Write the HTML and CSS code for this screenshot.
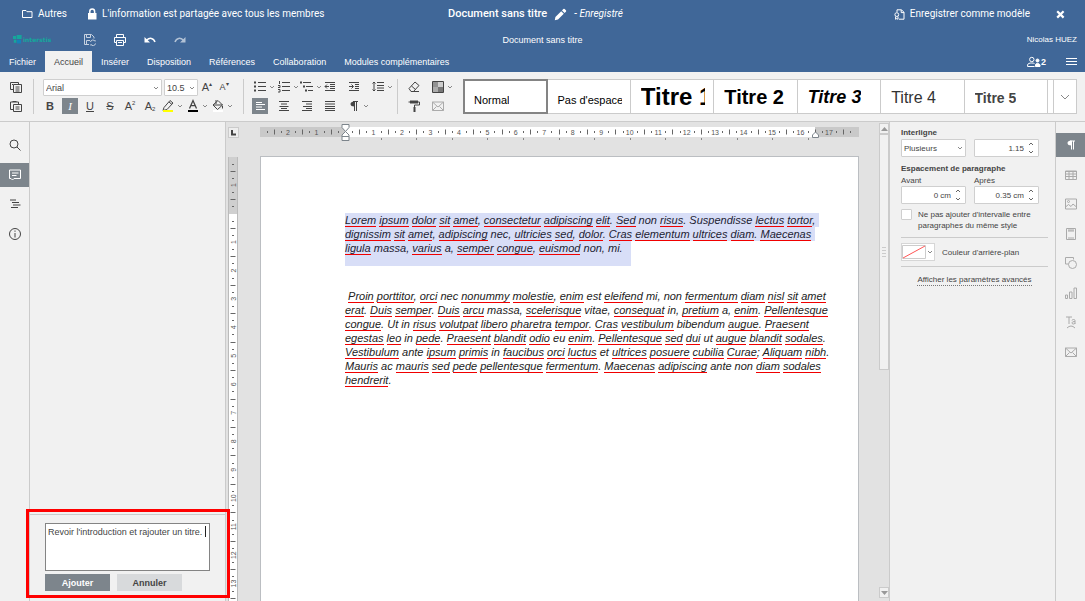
FILE: index.html
```html
<!DOCTYPE html>
<html lang="fr">
<head>
<meta charset="utf-8">
<title>Document sans titre</title>
<link rel="stylesheet" href="styles.css">
</head>
<body>
<svg class="defs" width="0" height="0">
  <symbol id="chev" viewBox="0 0 8 16"><path d="M2 7l2 2 2-2" /></symbol>
  <symbol id="mail" viewBox="0 0 16 16"><path d="M2.500 4h11v8.500h-11zM2.500 4l5.500 5 5.500-5M2.500 12.500l4-4M13.500 12.500l-4-4"/></symbol>
</svg>
<header class="header">
  <div class="bar top">
    <div class="side">
      <a class="item folder" href="#"><svg width="11" height="10" viewBox="0 0 11 10" class="ln"><path d="M.5 8.500v-7h3.500l1 1.200h5v5.800z"/></svg>Autres</a>
      <span class="item"><svg width="10" height="12" viewBox="0 0 10 12"><path fill="#fff" d="M1 5h8.500v6.500H1z"/><path class="ln" stroke-width="1.500" d="M2.800 5.500V3.500a2.400 2.400 0 0 1 4.800 0v2"/></svg>L'information est partagée avec tous les membres</span>
    </div>
    <div class="doc"><h1>Document sans titre</h1><svg width="13" height="13" viewBox="0 0 13 13"><path fill="#fff" d="M.8 12.200l.6-3.200 5.800-5.800 2.600 2.600L4 11.600zM8 2.400l1.300-1.300a1 1 0 0 1 1.400 0l1.200 1.200a1 1 0 0 1 0 1.400L10.600 5z"/></svg><em>- Enregistré</em></div>
    <div class="side end">
      <button class="item"><svg width="11" height="11" viewBox="0 0 11 11" class="ln"><path d="M3 3V.8h4.500L10 3.300v6.900H5M7.200.8v2.800H10"/><circle cx="2.800" cy="5.600" r="1.900"/><path d="M1.600 7.500v2.800l1.200-.8 1.200.8V7.500"/></svg>Enregistrer comme modèle</button>
      <button class="close" aria-label="Fermer"><svg width="9" height="9" viewBox="0 0 9 9"><path stroke="#fff" stroke-width="2.200" d="M1.200 1.200l6.400 6.400M7.600 1.200L1.200 7.600"/></svg></button>
    </div>
  </div>
  <div class="bar mid">
    <div class="quick">
      <span class="logo"><svg width="9" height="9" viewBox="0 0 9 9"><path fill="#15a79c" d="M0 1h3v3H0zM3.600 0h5v4h-5zM.8 4.800h2.600v3H.8z"/><path fill="#1681b8" d="M4 4.800h4v3.700H4z"/></svg>interstis</span>
      <button aria-label="Enregistrer"><svg width="14" height="14" viewBox="0 0 14 14" class="ln dim"><path d="M6 11.500H1.500v-10h7l2.500 2.500v1.500M3.500 1.500v3h4v-3M3.500 11.500v-4H7M7.500 9a2.400 2.400 0 0 1 4.500-.7V7M12.500 10.500a2.400 2.400 0 0 1-4.500.8v1.400"/></svg></button>
      <button aria-label="Imprimer"><svg width="14" height="14" viewBox="0 0 14 14" class="ln"><path d="M3.500 4.500v-3h7v3M3.500 9.500h-2v-5h11v5h-2M3.500 7.500h7v5h-7zM5 9.500h4"/></svg></button>
      <button aria-label="Annuler l'action"><svg width="14" height="14" viewBox="0 0 14 14"><path fill="#fff" d="M1.500 4v5.500H7z"/><path stroke="#fff" stroke-width="1.500" fill="none" d="M3.500 7.300C6.500 4.500 10.500 4.500 12 9"/></svg></button>
      <button aria-label="Rétablir"><svg width="14" height="14" viewBox="0 0 14 14" opacity=".6"><path fill="#fff" d="M12.500 4v5.500H7z"/><path stroke="#fff" stroke-width="1.500" fill="none" d="M10.500 7.300C7.500 4.500 3.500 4.500 2 9"/></svg></button>
    </div>
    <span>Document sans titre</span>
    <span class="user">Nicolas HUEZ</span>
  </div>
  <nav class="tabs">
    <a href="#">Fichier</a><a href="#" class="on">Accueil</a><a href="#">Insérer</a><a href="#">Disposition</a><a href="#">Références</a><a href="#">Collaboration</a><a href="#">Modules complémentaires</a>
    <div class="tools">
      <button class="people"><svg width="14" height="12" viewBox="0 0 14 12" class="ln"><circle cx="4.800" cy="3.500" r="2.200"/><path d="M.6 10.500v-1.500c0-1.500 2-2 4.200-2 1.200 0 2 .2 2.700.6M.6 10.500h7"/><circle cx="10.500" cy="4.500" r="1.500" fill="#fff"/><path fill="#fff" d="M8.500 10.500V9q0-1.500 2-1.500T13 9v1.500z"/></svg>2</button>
      <button aria-label="Menu"><svg width="11" height="9" viewBox="0 0 11 9" class="ln"><path d="M0 1.500h11M0 4.500h11M0 7.500h11"/></svg></button>
    </div>
  </nav>
</header>

<div class="toolbar">
  <div class="group clip">
    <button aria-label="Copier"><svg viewBox="0 0 16 16"><path d="M5.500 10.500h-3v-7h8v2M5.500 5.500h8v8h-8zM7.500 8h4M7.500 10h4M7.500 12h4M4 5.500h1"/></svg></button>
    <button aria-label="Coller"><svg viewBox="0 0 16 16"><path d="M5.500 11.500h-3v-7.500h8v2M4.500 3.500h4M5.500 6.500h8v7h-8zM7.500 9h4M7.500 11h4"/></svg></button>
  </div>
  <div class="group font">
    <div class="row pick">
      <select class="family" aria-label="Police"><option>Arial</option></select>
      <select class="size" aria-label="Taille"><option>10.5</option></select>
      <button class="glyph" aria-label="Agrandir">A<sup>▴</sup></button><button class="glyph sm" aria-label="Réduire">A<sup>▾</sup></button>
    </div>
    <div class="row">
      <div class="row marks"><button class="glyph b">B</button><button class="glyph i on">I</button><button class="glyph u">U</button><button class="glyph s">S</button><button class="glyph">A<sup>2</sup></button><button class="glyph">A<sub>2</sub></button></div>
      <button class="combo" aria-label="Surlignage"><svg viewBox="0 0 16 16"><path d="M4 9.500l6-7 3 2.500-6 6.500-4 1z M9 4l3 2.500"/><path class="fill yellow" d="M3 12h10v2H3z"/></svg><svg class="chev"><use href="#chev"/></svg></button>
      <button class="combo" aria-label="Couleur de police"><svg viewBox="0 0 16 16"><path d="M4.500 10.500l3.500-8 3.500 8M5.700 7.700h4.600" stroke-width="1.300"/><path class="fill black" d="M3 12h10v2H3z"/></svg><svg class="chev"><use href="#chev"/></svg></button>
      <button class="combo" aria-label="Remplissage"><svg viewBox="0 0 16 16"><path class="fill white" d="M3 12h10v2H3z"/><path d="M3 7l5-4.500 4.500 4.500-5 4.500zM6 2v4M12.500 8v2.500M3.500 7h9"/></svg><svg class="chev"><use href="#chev"/></svg></button>
    </div>
  </div>
  <div class="group para">
    <button aria-label="Puces"><svg viewBox="0 0 16 16"><path d="M6 3.500h8M6 7.500h8M6 11.500h8"/><path class="fill" d="M2 2.500h2v2H2zM2 6.500h2v2H2zM2 10.500h2v2H2z"/></svg><svg class="chev"><use href="#chev"/></svg></button>
    <button aria-label="Numérotation"><svg viewBox="0 0 16 16"><path d="M6 3.500h8M6 7.500h8M6 11.500h8M3.500 2v3M2 6.500h2v2H2M2 10.500h2v2.500H2"/></svg><svg class="chev"><use href="#chev"/></svg></button>
    <button aria-label="Liste multiniveau"><svg viewBox="0 0 16 16"><path d="M4 3.500h8M7 7.500h7M9 11.500h5"/><path class="fill" d="M1 2.500h2v2H1zM4 6.500h2v2H4zM6 10.500h2v2H6z"/></svg><svg class="chev"><use href="#chev"/></svg></button>
    <button aria-label="Diminuer le retrait"><svg viewBox="0 0 16 16"><path d="M3 3.500h10M8 5.500h5M8 7.500h5M8 9.500h5M3 11.500h10M3 7.500h4M5 5.500l-2 2 2 2"/></svg></button>
    <button aria-label="Augmenter le retrait"><svg viewBox="0 0 16 16"><path d="M3 3.500h10M9 5.500h4M9 7.500h4M9 9.500h4M3 11.500h10M3 7.500h4M5.500 5.500l2 2-2 2"/></svg></button>
    <button aria-label="Interligne"><svg viewBox="0 0 16 16"><path d="M7 3.500h7M7 6.500h7M7 9h7M7 11.500h7M4 3v9M2.500 4.500L4 3l1.500 1.500M2.500 10.500L4 12l1.500-1.500"/></svg><svg class="chev"><use href="#chev"/></svg></button>
    <button class="on" aria-label="Gauche"><svg viewBox="0 0 16 16"><path d="M4 4.500h6M4 6.500h9M4 9h6M4 11.500h9"/></svg></button>
    <button aria-label="Centrer"><svg viewBox="0 0 16 16"><path d="M3 3.500h10M5 6h6M3.500 8.500h9M5 10.500h6M3 12.500h10"/></svg></button>
    <button aria-label="Droite"><svg viewBox="0 0 16 16"><path d="M3 3.500h10M7 6h6M4 8.500h9M7 10.500h6M3 12.500h10"/></svg></button>
    <button aria-label="Justifier"><svg viewBox="0 0 16 16"><path d="M3 3.500h10M3 6h10M3 8.500h10M3 10.500h10M3 12.500h10"/></svg></button>
    <button aria-label="Caractères non imprimables"><svg viewBox="0 0 16 16"><path d="M8.500 4v9M10.500 4v9M7 3.500h5"/><path class="fill" d="M8.500 3.500v5q-4 0-4-2.500t4-2.500z"/></svg><svg class="chev"><use href="#chev"/></svg></button>
  </div>
  <div class="group extra">
    <button aria-label="Effacer le style"><svg viewBox="0 0 16 16"><path d="M3 9.500l6-6.500 4 3.500-5.500 6H5zM5.500 7l4 3.500M7 12.500h6"/></svg></button>
    <button aria-label="Couleurs"><svg viewBox="0 0 16 16"><path class="fill" fill-opacity=".55" d="M3 3h5v5H3z"/><path class="fill" fill-opacity=".2" d="M8 3h5v5H8z"/><path class="fill" fill-opacity=".4" d="M3 8h5v5H3z"/><path class="fill" fill-opacity=".7" d="M8 8h5v5H8z"/><path d="M2.500 2.500h11v11h-11z"/></svg><svg class="chev"><use href="#chev"/></svg></button>
    <button aria-label="Copier le style"><svg viewBox="0 0 16 16"><path class="fill" d="M4 2.500h8v3H4z"/><path d="M12 4h1.500v3H8.500v2M4 4H2.500"/><path class="fill" d="M7.500 9h2v5h-2z"/></svg></button>
    <button class="off" aria-label="Publipostage"><svg viewBox="0 0 16 16"><use href="#mail"/></svg></button>
  </div>
  <div class="gallery">
    <button class="sel"><span class="n">Normal</span></button>
    <button><span class="n">Pas d'espacement</span></button>
    <button><span class="t1">Titre 1</span></button>
    <button><span class="t2">Titre 2</span></button>
    <button><span class="t3">Titre 3</span></button>
    <button><span class="t4">Titre 4</span></button>
    <button><span class="t5">Titre 5</span></button>
    <i></i>
    <button class="more" aria-label="Plus de styles"><svg width="10" height="8" viewBox="0 0 10 8"><path d="M1 2l4 4 4-4"/></svg></button>
  </div>
</div>

<main class="main">
  <nav class="rail left">
    <button aria-label="Recherche"><svg viewBox="0 0 16 16"><circle cx="7" cy="7" r="4"/><path d="M10 10l3.500 3.500"/></svg></button>
    <button class="on" aria-label="Commentaires"><svg viewBox="0 0 16 16"><path d="M2.500 3h11v8.500H7L5.500 13 4 11.500H2.500zM5 6h6.500M5 8.500h4.500"/></svg></button>
    <button aria-label="Navigation"><svg viewBox="0 0 16 16"><path d="M3 4h6M5 6.500h7M6 9h7.500M4 11.500h7"/></svg></button>
    <button aria-label="À propos"><svg viewBox="0 0 16 16"><circle cx="8" cy="8" r="5.500"/><path d="M8 7v4.500M8 4.500v1.300"/></svg></button>
  </nav>
  <aside class="comments">
    <form class="new">
      <textarea aria-label="Commentaire">Revoir l'introduction et rajouter un titre.</textarea>
      <span class="caret"></span>
      <div class="acts"><button type="button" class="ok">Ajouter</button><button type="button">Annuler</button></div>
      <div class="callout"></div>
    </form>
  </aside>
  <section class="editor">
    <div class="corner"><svg width="11" height="11" viewBox="0 0 11 11"><path d="M4 3v4.500h4" stroke="#444" stroke-width="2" fill="none"/></svg></div>
    <svg id="hruler" class="hruler"></svg>
    <svg id="vruler" class="vruler"></svg>
    <article class="page">
      <div class="selection">
        <p><u>Lorem</u> <u>ipsum</u> <u>dolor</u> <u>sit</u> <u>amet</u>, <u>consectetur</u> <u>adipiscing</u> <u>elit</u>. <u>Sed</u> non <u>risus</u>. Suspendisse <u>lectus</u> <u>tortor</u>,</p>
        <p><u>dignissim</u> <u>sit</u> <u>amet</u>, <u>adipiscing</u> nec, <u>ultricies</u> <u>sed</u>, <u>dolor</u>. <u>Cras</u> <u>elementum</u> <u>ultrices</u> <u>diam</u>. <u>Maecenas</u></p>
        <p class="last"><u>ligula</u> massa, <u>varius</u> a, <u>semper</u> <u>congue</u>, <u>euismod</u> non, mi.</p>
      </div>
      <div class="text">
        <p>&nbsp;<u>Proin</u> <u>porttitor</u>, <u>orci</u> nec <u>nonummy</u> <u>molestie</u>, <u>enim</u> est <u>eleifend</u> mi, non <u>fermentum</u> <u>diam</u> <u>nisl</u> <u>sit</u> <u>amet</u></p>
        <p><u>erat</u>. <u>Duis</u> <u>semper</u>. <u>Duis</u> <u>arcu</u> massa, <u>scelerisque</u> vitae, <u>consequat</u> in, <u>pretium</u> a, <u>enim</u>. <u>Pellentesque</u></p>
        <p><u>congue</u>. Ut in <u>risus</u> <u>volutpat</u> <u>libero</u> <u>pharetra</u> <u>tempor</u>. <u>Cras</u> <u>vestibulum</u> bibendum <u>augue</u>. <u>Praesent</u></p>
        <p><u>egestas</u> <u>leo</u> in <u>pede</u>. <u>Praesent</u> <u>blandit</u> <u>odio</u> eu <u>enim</u>. <u>Pellentesque</u> <u>sed</u> <u>dui</u> ut <u>augue</u> <u>blandit</u> <u>sodales</u>.</p>
        <p><u>Vestibulum</u> ante <u>ipsum</u> <u>primis</u> in <u>faucibus</u> <u>orci</u> <u>luctus</u> et <u>ultrices</u> <u>posuere</u> <u>cubilia</u> <u>Curae</u>; <u>Aliquam</u> <u>nibh</u>.</p>
        <p><u>Mauris</u> ac <u>mauris</u> <u>sed</u> <u>pede</u> <u>pellentesque</u> <u>fermentum</u>. <u>Maecenas</u> <u>adipiscing</u> ante non <u>diam</u> <u>sodales</u></p>
        <p><u>hendrerit</u>.</p>
      </div>
    </article>
  </section>
  <div class="scroll">
    <button aria-label="Haut"><svg width="7" height="4"><path fill="#999" d="M0 4l3.500-4L7 4z"/></svg></button>
    <div class="thumb"><i></i></div>
    <button class="down" aria-label="Bas"><svg width="7" height="4"><path fill="#999" d="M0 0l3.500 4L7 0z"/></svg></button>
  </div>
  <aside class="props">
    <div class="fields">
      <label class="strong" for="ls">Interligne</label>
      <select id="ls"><option>Plusieurs</option></select>
      <input class="spin" value="1.15" aria-label="Valeur d'interligne">
      <span class="strong para-title">Espacement de paragraphe</span>
      <label for="bf">Avant</label><label for="af">Après</label>
      <input class="spin" id="bf" value="0 cm"><input class="spin" id="af" value="0.35 cm">
    </div>
    <label class="check"><input type="checkbox"><span>Ne pas ajouter d'intervalle entre paragraphes du même style</span></label>
    <div class="bg"><button id="bgc" aria-label="Couleur d'arrière-plan"><svg width="24" height="14" viewBox="0 0 24 14"><path fill="#fff" stroke="#ccc" d="M.5.5h23v13H.5z"/><path stroke="#f55" d="M1 13L23 1"/></svg><svg class="chev"><use href="#chev"/></svg></button><label for="bgc">Couleur d'arrière-plan</label></div>
    <a class="adv" href="#">Afficher les paramètres avancés</a>
  </aside>
  <nav class="rail objects">
    <button class="on" aria-label="Paragraphe"><svg viewBox="0 0 16 16"><path d="M8.500 4v8.500M10.500 4v8.500M7 4h5"/><path class="fill" d="M8.500 3.500v5q-4 0-4-2.500t4-2.500z"/></svg></button>
    <button aria-label="Tableau"><svg viewBox="0 0 16 16"><path d="M2.500 4h11v8.500h-11zM2.500 7h11M2.500 9.500h11M6 4v8.500M10 4v8.500M2.500 4.500h11"/></svg></button>
    <button aria-label="Image"><svg viewBox="0 0 16 16"><path d="M2.500 3h11v10h-11zM2.500 11l3-2.500 2.500 2 2-2.500 3.500 3"/><circle cx="5.500" cy="5.500" r="1"/></svg></button>
    <button aria-label="En-tête"><svg viewBox="0 0 16 16"><path d="M3.500 2.500h9v11h-9zM5 4h6M5 12h6M5 5h6"/></svg></button>
    <button aria-label="Forme"><svg viewBox="0 0 16 16"><path d="M5.500 9h-3V2.500h8v2"/><circle cx="9.500" cy="9.500" r="4"/></svg></button>
    <button aria-label="Graphique"><svg viewBox="0 0 16 16"><path d="M2.500 10h2v3.500h-2zM6.500 7h2.500v6.500H6.500zM11 3h2.500v10.500H11z"/></svg></button>
    <button aria-label="Text Art"><svg viewBox="0 0 16 16"><path d="M3 3h6M6 3v7M12 10V6.500q0-1-1.500-1T9 6.500M12 7.500q-3 0-3 1.300T10.500 10 12 9M4 14q4-4 8 0"/></svg></button>
    <button aria-label="Publipostage"><svg viewBox="0 0 16 16"><use href="#mail"/></svg></button>
  </nav>
</main>
<script src="rulers.js"></script>
</body>
</html>
```
FILE: styles.css
```css
* { box-sizing: border-box; }
html, body { height: 100%; }
body {
  margin: 0; display: flex; flex-direction: column; overflow: hidden;
  background: #f1f1f1; color: #444;
  font: 9px/12px "Liberation Sans", Arial, sans-serif;
}
button { padding: 0; border: 0; background: none; color: inherit; font: inherit; display: flex; align-items: center; justify-content: center; }
a { color: inherit; text-decoration: none; }
svg { flex: none; fill: none; stroke: none; }
p, h1 { margin: 0; }
.defs { position: absolute; }
.ln { stroke: #fff; fill: none; }
.dim { opacity: .7; }

.header { background: #406798; color: #fff; }
.bar { display: grid; grid-template-columns: 1fr auto 1fr; align-items: center; }
.top { height: 28px; padding: 0 20px 0 22px; font: 400 10px/14px Roboto, sans-serif; }
.side { display: flex; gap: 20px; }
.end { justify-content: flex-end; gap: 26px; }
.item { display: flex; align-items: center; gap: 5px; }
.doc { display: flex; align-items: center; gap: 7px; margin-right: 16px; }
.doc h1 { font-size: 11px; font-weight: 500; }
.mid { height: 23px; padding: 0 8px 0 13px; }
.quick { display: flex; align-items: center; gap: 16px; }
.logo { display: flex; align-items: center; gap: 1px; width: 54px; color: #15a79c; font: bold 6px/9px "DejaVu Sans", sans-serif; }
.bar > span:not(.user) { margin-right: 5px; }
.user { text-align: right; font-size: 8px; }
.tabs { display: flex; height: 21px; }
.tabs > a { display: flex; align-items: center; padding: 0 9px; }
.tabs .on { background: #f1f1f1; color: #444; }
.tools { display: flex; gap: 20px; margin-left: auto; padding-right: 8px; }
.people { font-weight: bold; }

.toolbar { display: flex; height: 50px; padding: 7px 8px 7px 8px; border-bottom: 1px solid #cbcbcb; }
.toolbar svg, .rail svg { width: 16px; height: 16px; stroke: currentColor; }
svg .fill { fill: currentColor; stroke: none; }
svg .yellow { fill: #ff0; }
svg .black { fill: #000; }
svg .white { fill: #fff; }
svg.chev, .toolbar svg.chev { width: 8px; height: 16px; stroke: #888; }
.group { border-right: 1px solid #cbcbcb; display: grid; grid-template-rows: 16px 16px; gap: 3px 0; height: 35px; }
.group button { height: 16px; justify-content: flex-start; }
.clip { width: 26px; }
.font { width: 210px; padding-left: 8px; }
.row { display: flex; }
.pick { gap: 1px; padding-left: 1px; }
.marks { gap: 4px; padding-right: 2px; }
.group .glyph { width: 16px; justify-content: center; font-size: 11px; line-height: 14px; }
.glyph sup, .glyph sub { font-size: 6px; line-height: 6px; }
.glyph sup { align-self: flex-start; padding-top: 2px; }
.glyph sub { align-self: flex-end; padding-bottom: 2px; }
.group .sm { font-size: 9px; }
.b { font-weight: bold; }
.i { font-family: "Liberation Serif", serif; font-style: italic; }
.u { text-decoration: underline; }
.s { text-decoration: line-through; }
.group .on { background: #7d858c; color: #fff; width: 16px; }
.combo { width: 25px; }
.para { width: 154px; padding-left: 8px; grid-template-columns: 24px 23px 23px 24px 24px 24px; }
.extra { padding-left: 8px; grid-template-columns: 24px 24px; border: 0; width: 65px; }
.off { opacity: .4; }

select, input, textarea { margin: 0; border: 1px solid #cfcfcf; border-radius: 1px; background: #fff; color: #444; font: inherit; outline: 0; }
select {
  appearance: none; height: 17px; padding: 0 2px;
  background: #fff url("data:image/svg+xml,%3Csvg xmlns='http://www.w3.org/2000/svg' width='6' height='4'%3E%3Cpath d='M1 1l2 2 2-2' fill='none' stroke='%23888'/%3E%3C/svg%3E") no-repeat right 2px center;
}
.family { width: 119px; margin-right: 1px; }
.size { width: 34px; }

.gallery { flex: 1; display: grid; grid-template-columns: repeat(7, 1fr) 6px 22px; height: 35px; border: 1px solid #cbcbcb; background: #fff; }
.gallery button { border-right: 1px solid #cbcbcb; padding: 0 8px 0 10px; justify-content: flex-start; overflow: hidden; min-width: 0; color: #000; }
.gallery i { border-right: 1px solid #cbcbcb; }
.gallery .sel { outline: 2px solid #848484; outline-offset: -1px; border: 0; }
.gallery span { overflow: hidden; white-space: nowrap; text-align: left; }
.gallery .n { font-size: 11px; line-height: 14px; padding-top: 6px; }
.gallery .t1 { font-size: 24px; line-height: 30px; font-weight: bold; }
.gallery .t2 { font-size: 20px; line-height: 24px; font-weight: bold; }
.gallery .t3 { font-size: 18px; line-height: 22px; font-weight: bold; font-style: italic; }
.gallery .t4 { font-size: 16px; line-height: 20px; padding-top: 3px; color: #333; }
.gallery .t5 { font-size: 14px; line-height: 20px; padding-top: 3px; color: #444; font-weight: bold; }
.gallery .more { border: 0; padding: 0; justify-content: center; }
.gallery .more svg { width: 10px; height: 8px; stroke: #888; }

.main { flex: 1; display: flex; min-height: 0; }
.rail { display: grid; grid-auto-rows: 24px; align-content: space-between; margin-top: 11px; width: 29px; }
.rail .on { background: #7d858c; color: #fff; }
.left { height: 113px; }
.objects { height: 231px; color: #aaa; }
.comments { width: 197px; border: solid #cbcbcb; border-width: 0 1px; display: flex; flex-direction: column; justify-content: flex-end; }
.new { position: relative; border-top: 1px solid #cbcbcb; padding: 8px 15px 10px; }
.new textarea { display: block; width: 100%; height: 48px; padding: 2px; border-color: #848484; border-radius: 0; resize: none; overflow: hidden; }
.caret { position: absolute; left: 175px; top: 11px; width: 1px; height: 11px; background: #222; }
.acts { display: flex; gap: 7px; padding-top: 3px; }
.acts button { width: 65px; height: 17px; background: #d8dadc; font-weight: bold; }
.acts .ok { background: #7d858c; color: #fff; }
.callout { position: absolute; inset: -6px -5px 3px -4px; border: 3px solid #f00; pointer-events: none; z-index: 2; }

.editor { flex: 1; min-width: 0; background: #e2e2e2; display: grid; grid-template: 34px 1fr / 34px 1fr; padding-right: 20px; }
.corner { width: 11px; height: 11px; margin: 5px 0 0 2px; background: #eee; outline: 1px solid #cbcbcb; outline-offset: -1px; }
.hruler { width: 100%; height: 24px; overflow: visible; }
.vruler { width: 14px; height: 100%; }
.hruler text, .vruler text { font: 7px "Liberation Sans", sans-serif; fill: #555; text-anchor: middle; }
.page { background: #fff; border: 1px solid #bbbec2; border-bottom: 0; padding: 56px 0 0 84px; overflow: hidden; min-width: 0; color: #222; font: italic 11px/14px "Liberation Sans", Arial, sans-serif; white-space: nowrap; }
.page u { text-decoration: none; border-bottom: 1px solid #f00000; }
.selection p { width: fit-content; padding-right: 4px; background: #d8def7; color: #223; }
.selection .last { padding: 0 8px 11px 0; }
.text { padding-top: 23px; }

.scroll { width: 11px; background: #e2e2e2; display: flex; flex-direction: column; padding: 1px 0 3px; border-right: 1px solid #cbcbcb; }
.scroll button { height: 11px; border: 1px solid #cbcbcb; background: #f1f1f1; }
.thumb { height: 236px; border: 1px solid #cbcbcb; background: #f1f1f1; display: grid; place-items: center; }
.thumb i { width: 4px; height: 11px; background: repeating-linear-gradient(#cbcbcb 0 1px, transparent 1px 3px); }
.scroll .down { margin-top: auto; }

.props { width: 166px; border-right: 1px solid #cbcbcb; padding: 5px 7px 0 11px; font-size: 8px; line-height: 11px; }
.fields { display: grid; grid-template-columns: 65px 65px; column-gap: 8px; }
.fields input, .fields select { height: 18px; width: 65px; }
.strong { font-weight: bold; grid-column: 1 / 3; line-height: 12px; }
.para-title { padding-top: 6px; }
.spin {
  text-align: right; padding: 0 14px 0 2px;
  background: #fff url("data:image/svg+xml,%3Csvg xmlns='http://www.w3.org/2000/svg' width='6' height='12'%3E%3Cpath d='M1 3l2-2 2 2M1 9l2 2 2-2' fill='none' stroke='%23666'/%3E%3C/svg%3E") no-repeat right 4px center;
}
.check { display: flex; gap: 6px; padding: 5px 0 6px; }
.check input { appearance: none; flex: none; width: 11px; height: 11px; }
.check span { max-width: 125px; }
.bg { display: flex; align-items: center; gap: 7px; border: solid #cbcbcb; border-width: 1px 0; padding: 5px 0; height: 30px; }
.bg button { border: 1px solid #d6d6d6; background: #fff; height: 18px; width: 34px; }
.adv { display: block; width: fit-content; margin: 7px auto 0; border-bottom: 1px dotted #777; }
```
FILE: rulers.js
```js
const NS = 'http://www.w3.org/2000/svg';
const CM = 28.47;

function add(svg, name, attrs, text) {
  const el = document.createElementNS(NS, name);
  for (const key in attrs) el.setAttribute(key, attrs[key]);
  if (text) el.textContent = text;
  svg.appendChild(el);
}

// Quarter-centimetre marks: numbers on whole units, long ticks on halves.
function scale(svg, from, to, origin, mark) {
  for (let k = from; k <= to; k++) {
    if (k === 0) continue;
    const pos = origin + k * CM / 4;
    if (k % 4 === 0) mark.label(pos, Math.abs(k / 4));
    else mark.tick(Math.round(pos), k % 2 === 0 ? 5 : 2);
  }
}

const h = document.getElementById('hruler');
add(h, 'rect', { x: 0, y: 5, width: '100%', height: 10, fill: '#c9c9c9' });
add(h, 'rect', { x: 85, y: 5, width: 470, height: 10, fill: '#fff' });
scale(h, -11, 71, 85, {
  label: (p, n) => add(h, 'text', { x: p, y: 12.5 }, n),
  tick: (p, s) => add(h, 'rect', { x: p, y: 10 - s / 2, width: 1, height: s, fill: '#666' })
});
for (let i = 1; i <= 13; i++) add(h, 'rect', { x: Math.round(85 + i * 35.6), y: 16, width: 1, height: 2, fill: '#888' });
const marker = { fill: '#fff', stroke: '#7d858c' };
add(h, 'path', { d: 'M82 2.500h7v3l-3.500 4-3.500-4zM85.500 9.500l3.500 3.500v5.500h-7v-5.500zM82 14.500h7', ...marker });
add(h, 'path', { d: 'M555.500 10l3 3v2.500h-6v-2.500z', ...marker });

const v = document.getElementById('vruler');
add(v, 'rect', { x: 2, y: 1, width: 10, height: '100%', fill: '#bbb' });
add(v, 'rect', { x: 3, y: 1, width: 8, height: 57, fill: '#cfcfcf' });
add(v, 'rect', { x: 3, y: 58, width: 8, height: '100%', fill: '#fff' });
scale(v, -7, 54, 57.5, {
  label: (p, n) => add(v, 'text', { x: 0, y: 0, transform: `translate(9.5 ${p}) rotate(-90)` }, n),
  tick: (p, s) => add(v, 'rect', { x: 7 - s / 2, y: p, width: s, height: 1, fill: '#666' })
});
```
